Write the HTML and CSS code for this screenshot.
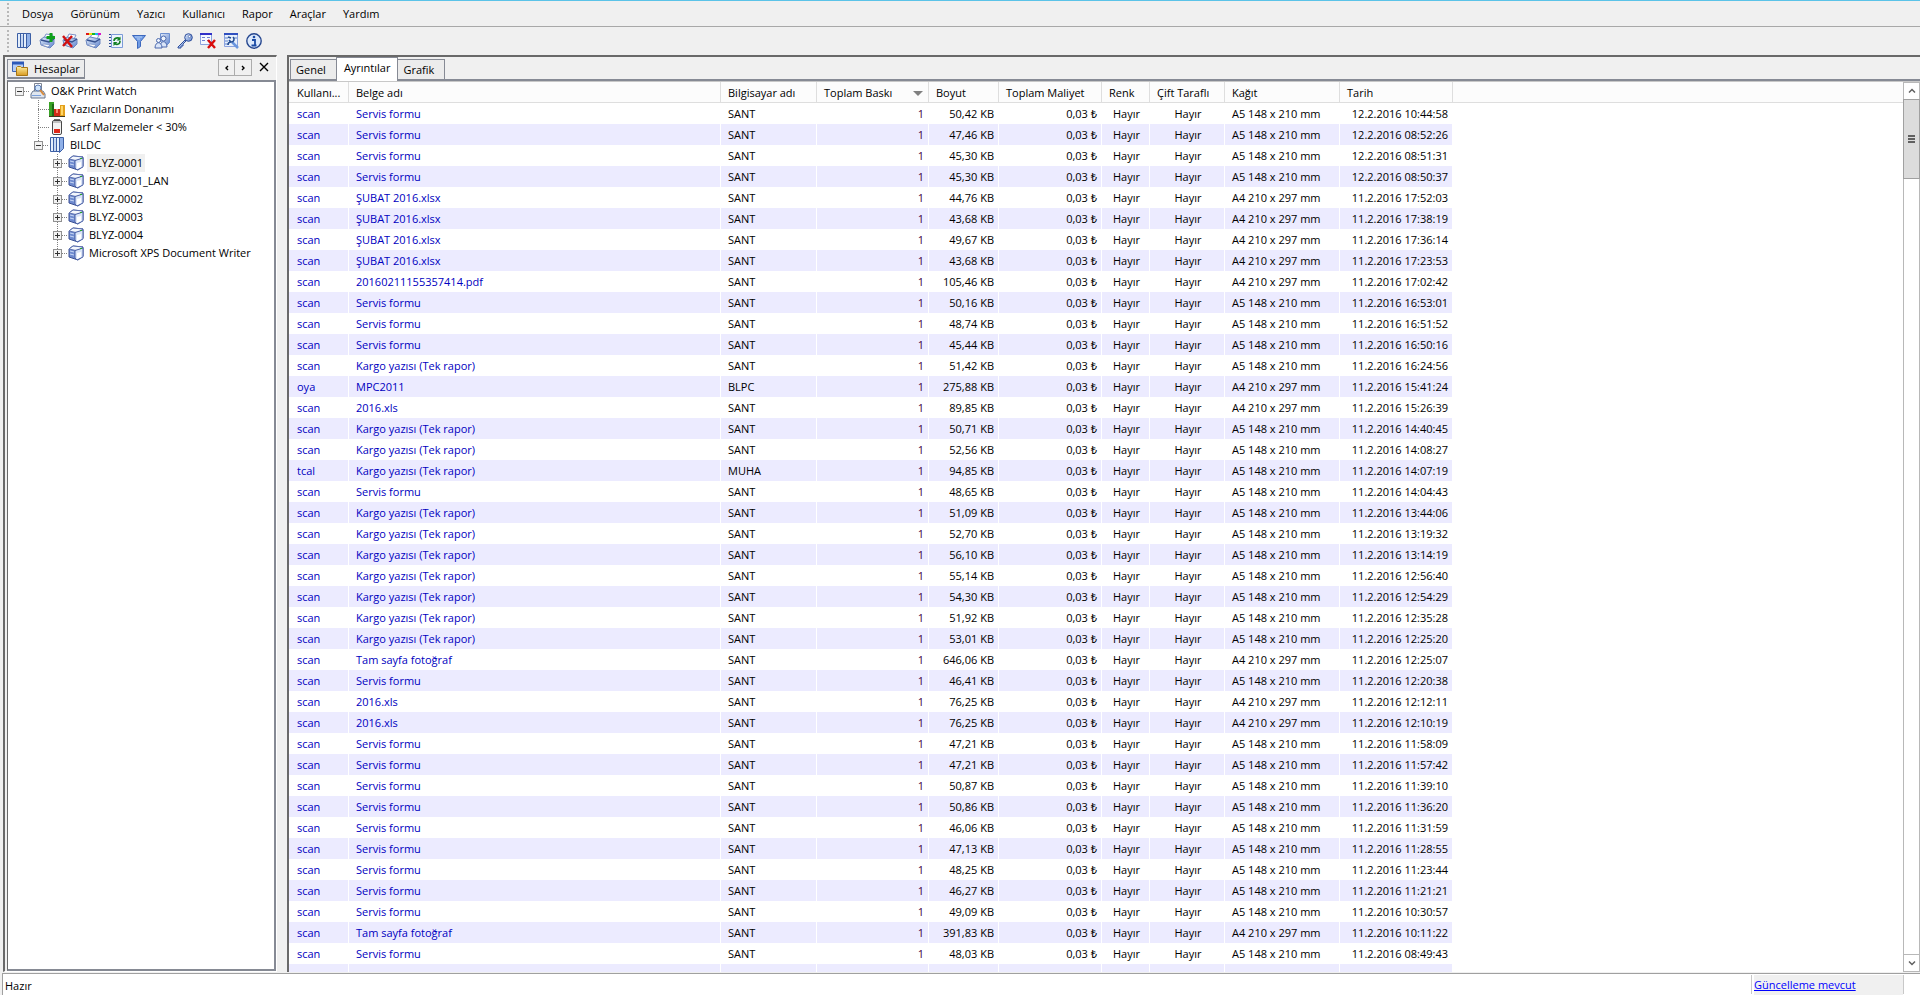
FILE: index.html
```html
<!DOCTYPE html>
<html lang="tr">
<head>
    <meta charset="UTF-8" />
    <title>O&amp;K Print Watch</title>
    <link rel="stylesheet" href="styles.css">
</head>
<body>
    <!-- shared icons -->
    <svg class="defs" width="0" height="0">
        <linearGradient id="blue" x1="0" y1="0" x2="1" y2="1">
            <stop offset="0" stop-color="#e4eefc"/><stop offset="1" stop-color="#5f83cc"/>
        </linearGradient>
        <linearGradient id="gold" x1="0" y1="0" x2="0" y2="1">
            <stop offset="0" stop-color="#fff0a0"/><stop offset="1" stop-color="#d89a20"/>
        </linearGradient>
        <symbol id="server" viewBox="0 0 16 16">
            <path d="M1.500 .5h9v14h-9z" fill="#e4eefb" stroke="#3c5fa5"/>
            <path d="M10.500 .5h4v11l-4 4z" fill="#8fb0e8" stroke="#3c5fa5"/>
            <path d="M4.500 1v13M7.500 1v13" stroke="#3c5fa5"/>
            <path d="M6 2v12" stroke="#a9c2ea"/>
        </symbol>
        <symbol id="printer" viewBox="0 0 16 16">
            <path d="M5 5l2-4 7 1-2 4z" fill="#fff" stroke="#7c92c8"/>
            <path d="M1 7l4-3 10 2v5l-4 4-9-3z" fill="url(#blue)" stroke="#6c86c0"/>
            <path d="M2 7l8 2 5-3" fill="none" stroke="#34508f" stroke-width="1.400"/>
            <path d="M3 12l6 2 2-2-6-1z" fill="#fff" stroke="#6e86bd" stroke-width=".6"/>
        </symbol>
        <symbol id="device" viewBox="0 0 16 16">
            <path d="M1 4l4-3 10 1v9l-5 4-9-3z" fill="#6f8bd0" stroke="#3a4f93"/>
            <path d="M1 4l4-3 10 1-5 4z" fill="#f4f7fd" stroke="#5b70b0"/>
            <path d="M7 5.500l8-2.500v9l-6 3-2-2z" fill="#dbe5f8" stroke="#4a60a6"/>
            <path d="M2 6l4 1M2 9l4 1" stroke="#c9d8f5"/>
            <path d="M9 8l4-1v5l-4 2z" fill="#fff"/>
            <path d="M12 3h2v1h-2z" fill="#27a52c"/>
        </symbol>
        <symbol id="cross" viewBox="0 0 16 16">
            <path d="M1 3l9 11M10 3L1 13" stroke="#d01010" stroke-width="2.400"/>
        </symbol>
    </svg>

    <nav class="menubar">
        <span class="grip"></span>
        <button>Dosya</button>
        <button>Görünüm</button>
        <button>Yazıcı</button>
        <button>Kullanıcı</button>
        <button>Rapor</button>
        <button>Araçlar</button>
        <button>Yardım</button>
    </nav>

    <div class="toolbar">
        <span class="grip"></span>
        <button aria-label="Sunucu"><svg viewBox="0 0 16 16"><use href="#server"/></svg></button>
        <button aria-label="Yazıcı ekle"><svg viewBox="0 0 16 16"><use href="#printer"/><path d="M12 0v9M7.500 4.500h9" stroke="#0fa01a" stroke-width="3"/></svg></button>
        <button aria-label="Yazıcı sil"><svg viewBox="0 0 16 16"><use href="#printer"/><use href="#cross"/></svg></button>
        <button aria-label="Renkli yazıcı"><svg viewBox="0 0 16 16"><use href="#printer"/><path d="M1 1h4" stroke="#e01818" stroke-width="2"/><path d="M4 1h3" stroke="#f2e010" stroke-width="2"/><path d="M7 1h3" stroke="#18b828" stroke-width="2"/><path d="M10 1h3" stroke="#18b0f0" stroke-width="2"/><path d="M13 1h3" stroke="#d818c8" stroke-width="2"/></svg></button>
        <button aria-label="Yenile"><svg viewBox="0 0 16 16"><path d="M3.500 1.500h11v13h-11z" fill="#eef4fd" stroke="#7c9bd8"/><path d="M2 1v14" stroke="#26478f" stroke-width="2" stroke-dasharray="1 2"/><path d="M6 8c0-3 4-4 6-2M12 8c0 4-4 4-6 2" fill="none" stroke="#148024" stroke-width="1.600"/><path d="M12.500 3.500v4h-4zM5.500 13V9h4z" fill="#148024"/></svg></button>
        <button aria-label="Filtre"><svg viewBox="0 0 16 16"><path d="M1.500 2.500h13l-5 6v5l-3 2v-7z" fill="#6f9be4" stroke="#3d68bd"/><path d="M4 4h7M6 6h3" stroke="#b9d2f8"/></svg></button>
        <button aria-label="Kullanıcılar"><svg viewBox="0 0 16 16"><path d="M6.500 .5h9v9l-3 3-6-4z" fill="url(#blue)" stroke="#6c8fd0"/><circle cx="9.500" cy="5.500" r="2.500" fill="#eef4fd" stroke="#4c69ad"/><path d="M6 14c0-7 7-7 7 0z" fill="#dbe6f9" stroke="#4c69ad"/><circle cx="4.500" cy="7.500" r="2" fill="#eef4fd" stroke="#4c69ad"/><path d="M1 15c0-7 7-7 7 0z" fill="#dbe6f9" stroke="#4c69ad"/></svg></button>
        <button aria-label="Parola"><svg viewBox="0 0 16 16"><path d="M8 7l-7 7v1h3v-2h2v-2l3-3z" fill="#a9c2ec" stroke="#2f4f9c"/><circle cx="11.500" cy="4.500" r="3.800" fill="url(#blue)" stroke="#2f4f9c"/><circle cx="12.500" cy="3.500" r="1.200" fill="#fff" stroke="#2f4f9c" stroke-width=".6"/></svg></button>
        <button aria-label="Kayıtları sil"><svg viewBox="0 0 16 16"><path d="M.5 1.500h11v10H.5z" fill="#f4f8ff" stroke="#8ba2de"/><path d="M0 1h12" stroke="#3030c8" stroke-width="2"/><path d="M2 4.500h3M7 4.500h3M2 7.500h3M7 7.500h3" stroke="#6f80d0"/><path d="M8 7l7 8M15 7l-7 8" stroke="#d80c0c" stroke-width="2.400"/></svg></button>
        <button aria-label="Ayarlar"><svg viewBox="0 0 16 16"><path d="M1.500 1.500h13v12h-13z" fill="#e8f0fc" stroke="#8ba2de"/><path d="M1 1h14" stroke="#3050c0" stroke-width="2"/><path d="M2 5h3M2 8h3M2 11h3M11 5h3" stroke="#5b80cc"/><path d="M9 9l6 6" stroke="#6b96de" stroke-width="2.500"/><path d="M5 4l3 1M10 4c2 2 1 5-2 5-2 0-3 1-3 3M6 7l2 2" fill="none" stroke="#234c92" stroke-width="1.600"/></svg></button>
        <button aria-label="Hakkında"><svg viewBox="0 0 16 16"><circle cx="8" cy="8" r="7.200" fill="#dce9fb" stroke="#26478f" stroke-width="1.400"/><path d="M6 7h3v5M5.500 12.500h5" fill="none" stroke="#1b4ba5" stroke-width="1.800"/><circle cx="8" cy="4" r="1.300" fill="#1b4ba5"/></svg></button>
    </div>

    <main class="workspace">
        <aside class="accounts">
            <div class="caption">
                <button class="caption-tab">
                    <svg viewBox="0 0 16 16"><path d="M.5 1.500h11v9H.5z" fill="#b5cdf4" stroke="#3f67b5"/><path d="M0 2h12" stroke="#2c59b8" stroke-width="3"/><path d="M4.500 6.500l1-1h3l1 1h6v8h-11z" fill="url(#gold)" stroke="#a87614"/></svg>
                    Hesaplar
                </button>
                <button class="step" aria-label="Önceki"><svg viewBox="0 0 8 8"><path d="M5 2l-2 2 2 2" /></svg></button>
                <button class="step" aria-label="Sonraki"><svg viewBox="0 0 8 8"><path d="M3 2l2 2-2 2" /></svg></button>
                <button class="close" aria-label="Kapat"><svg viewBox="0 0 10 10"><path d="M1 1l8 8M9 1L1 9" /></svg></button>
            </div>
            <div class="tree">
                <ul>
                    <li>
                        <div class="node"><button class="toggle" aria-label="Daralt"></button><i class="dots"></i>
                            <svg viewBox="0 0 16 16"><path d="M4.500 .5h7v8h-7z" fill="#fff" stroke="#7c8494"/><path d="M1 11l2-3h10l2 3v4H1z" fill="#dfe6ef" stroke="#66758c"/><circle cx="8" cy="5" r="3" fill="#cfe4fb" stroke="#5a7db8"/><path d="M10 7l4 5" stroke="#d88a3a" stroke-width="2"/><path d="M2 12.500h9" stroke="#7aa0dc"/></svg>
                            <span>O&amp;K Print Watch</span></div>
                        <ul>
                            <li><div class="node"><i class="dots leaf"></i>
                                <svg viewBox="0 0 16 16"><path d="M0 1h5v14H0z" fill="#39a226"/><path d="M3 3h2v12H3z" fill="#1f6a18"/><path d="M5 8h6v7H5z" fill="#d02a18"/><path d="M7 8h2v4H7z" fill="#f58a70"/><path d="M11 4h5v11h-5z" fill="#e3a01c"/><path d="M12 5h2v9h-2z" fill="#ffd667"/><path d="M0 15.500h16" stroke="#403820"/></svg>
                                <span>Yazıcıların Donanımı</span></div></li>
                            <li><div class="node"><i class="dots leaf"></i>
                                <svg viewBox="0 0 16 16"><rect x="3.500" y="1.500" width="9" height="14" rx="1.500" fill="#f2f2f2" stroke="#484848"/><path d="M5 10h6v4H5z" fill="#e02818"/><path d="M4 3h8" stroke="#b0b0b0" stroke-width="1.500"/><path d="M5 0h6v1H5z" fill="#707070"/></svg>
                                <span>Sarf Malzemeler &lt; 30%</span></div></li>
                            <li>
                                <div class="node"><button class="toggle" aria-label="Daralt"></button><i class="dots"></i><svg viewBox="0 0 16 16"><use href="#server"/></svg><span>BILDC</span></div>
                                <ul>
                                    <li><div class="node"><button class="toggle plus" aria-label="Genişlet"></button><i class="dots"></i><svg viewBox="0 0 16 16"><use href="#device"/></svg><span class="selected">BLYZ-0001</span></div></li>
                                    <li><div class="node"><button class="toggle plus" aria-label="Genişlet"></button><i class="dots"></i><svg viewBox="0 0 16 16"><use href="#device"/></svg><span>BLYZ-0001_LAN</span></div></li>
                                    <li><div class="node"><button class="toggle plus" aria-label="Genişlet"></button><i class="dots"></i><svg viewBox="0 0 16 16"><use href="#device"/></svg><span>BLYZ-0002</span></div></li>
                                    <li><div class="node"><button class="toggle plus" aria-label="Genişlet"></button><i class="dots"></i><svg viewBox="0 0 16 16"><use href="#device"/></svg><span>BLYZ-0003</span></div></li>
                                    <li><div class="node"><button class="toggle plus" aria-label="Genişlet"></button><i class="dots"></i><svg viewBox="0 0 16 16"><use href="#device"/></svg><span>BLYZ-0004</span></div></li>
                                    <li><div class="node"><button class="toggle plus" aria-label="Genişlet"></button><i class="dots"></i><svg viewBox="0 0 16 16"><use href="#device"/></svg><span>Microsoft XPS Document Writer</span></div></li>
                                </ul>
                            </li>
                        </ul>
                    </li>
                </ul>
            </div>
        </aside>

        <section class="details">
            <div class="tabs">
                <button>Genel</button>
                <button class="active">Ayrıntılar</button>
                <button>Grafik</button>
            </div>
            <div class="list">
                <div class="list-body">
                    <table>
                        <colgroup>
                            <col class="c-user"><col class="c-doc"><col class="c-pc"><col class="c-count"><col class="c-size">
                            <col class="c-cost"><col class="c-color"><col class="c-duplex"><col class="c-paper"><col class="c-date"><col>
                        </colgroup>
                        <thead>
                            <tr>
                                <th>Kullanı...</th>
                                <th>Belge adı</th>
                                <th>Bilgisayar adı</th>
                                <th><div class="sorted">Toplam Baskı <i class="arrow"></i></div></th>
                                <th>Boyut</th>
                                <th>Toplam Maliyet</th>
                                <th>Renk</th>
                                <th>Çift Taraflı</th>
                                <th>Kağıt</th>
                                <th>Tarih</th>
                                <th></th>
                            </tr>
                        </thead>
                        <tbody id="jobs"></tbody>
                    </table>
                </div>
                <div class="scrollbar">
                    <button aria-label="Yukarı"><svg viewBox="0 0 8 8"><path d="M1 5.500l3-3 3 3" /></svg></button>
                    <div class="track"><div class="thumb"></div></div>
                    <button aria-label="Aşağı"><svg viewBox="0 0 8 8"><path d="M1 2.500l3 3 3-3" /></svg></button>
                </div>
            </div>
        </section>
    </main>

    <footer class="statusbar">
        <span class="status">Hazır</span>
        <div class="update"><a href="#">Güncelleme mevcut</a></div>
    </footer>

    <script>
    (() => {
        const S = 'Servis formu';
        const K = 'Kargo yazısı (Tek rapor)';
        const T = 'Tam sayfa fotoğraf';
        const SU = 'ŞUBAT 2016.xlsx';
        const paper = { A5: 'A5 148 x 210 mm', A4: 'A4 210 x 297 mm' };

        // document, size, paper, date, user, computer
        const jobs = [
            [S, '50,42', 'A5', '12.2.2016 10:44:58'],
            [S, '47,46', 'A5', '12.2.2016 08:52:26'],
            [S, '45,30', 'A5', '12.2.2016 08:51:31'],
            [S, '45,30', 'A5', '12.2.2016 08:50:37'],
            [SU, '44,76', 'A4', '11.2.2016 17:52:03'],
            [SU, '43,68', 'A4', '11.2.2016 17:38:19'],
            [SU, '49,67', 'A4', '11.2.2016 17:36:14'],
            [SU, '43,68', 'A4', '11.2.2016 17:23:53'],
            ['20160211155357414.pdf', '105,46', 'A4', '11.2.2016 17:02:42'],
            [S, '50,16', 'A5', '11.2.2016 16:53:01'],
            [S, '48,74', 'A5', '11.2.2016 16:51:52'],
            [S, '45,44', 'A5', '11.2.2016 16:50:16'],
            [K, '51,42', 'A5', '11.2.2016 16:24:56'],
            ['MPC2011', '275,88', 'A4', '11.2.2016 15:41:24', 'oya', 'BLPC'],
            ['2016.xls', '89,85', 'A4', '11.2.2016 15:26:39'],
            [K, '50,71', 'A5', '11.2.2016 14:40:45'],
            [K, '52,56', 'A5', '11.2.2016 14:08:27'],
            [K, '94,85', 'A5', '11.2.2016 14:07:19', 'tcal', 'MUHA'],
            [S, '48,65', 'A5', '11.2.2016 14:04:43'],
            [K, '51,09', 'A5', '11.2.2016 13:44:06'],
            [K, '52,70', 'A5', '11.2.2016 13:19:32'],
            [K, '56,10', 'A5', '11.2.2016 13:14:19'],
            [K, '55,14', 'A5', '11.2.2016 12:56:40'],
            [K, '54,30', 'A5', '11.2.2016 12:54:29'],
            [K, '51,92', 'A5', '11.2.2016 12:35:28'],
            [K, '53,01', 'A5', '11.2.2016 12:25:20'],
            [T, '646,06', 'A4', '11.2.2016 12:25:07'],
            [S, '46,41', 'A5', '11.2.2016 12:20:38'],
            ['2016.xls', '76,25', 'A4', '11.2.2016 12:12:11'],
            ['2016.xls', '76,25', 'A4', '11.2.2016 12:10:19'],
            [S, '47,21', 'A5', '11.2.2016 11:58:09'],
            [S, '47,21', 'A5', '11.2.2016 11:57:42'],
            [S, '50,87', 'A5', '11.2.2016 11:39:10'],
            [S, '50,86', 'A5', '11.2.2016 11:36:20'],
            [S, '46,06', 'A5', '11.2.2016 11:31:59'],
            [S, '47,13', 'A5', '11.2.2016 11:28:55'],
            [S, '48,25', 'A5', '11.2.2016 11:23:44'],
            [S, '46,27', 'A5', '11.2.2016 11:21:21'],
            [S, '49,09', 'A5', '11.2.2016 10:30:57'],
            [T, '391,83', 'A4', '11.2.2016 10:11:22'],
            [S, '48,03', 'A5', '11.2.2016 08:49:43'],
        ];

        const rows = jobs.map(([doc, size, p, date, user = 'scan', pc = 'SANT']) => `
            <tr><td>${user}</td><td>${doc}</td><td>${pc}</td><td>1</td><td>${size} KB</td><td>0,03 ₺</td>
            <td>Hayır</td><td>Hayır</td><td>${paper[p]}</td><td>${date}</td><td></td></tr>`);
        rows.push('<tr>' + '<td></td>'.repeat(11) + '</tr>');
        document.getElementById('jobs').innerHTML = rows.join('');
    })();
    </script>
</body>
</html>
```
FILE: styles.css
```css
* {
    box-sizing: border-box;
}

body {
    margin: 0;
    height: 100vh;
    display: flex;
    flex-direction: column;
    overflow: hidden;
    background: #f0f0f0;
    color: #000;
    font: 11px/18px "Open Sans", "Noto Sans", sans-serif;
    border-top: 1px solid #5bc3e8;
}

button {
    font: inherit;
    color: inherit;
    margin: 0;
    padding: 0;
    border: 0;
    background: none;
}

svg {
    display: block;
    flex: none;
    width: 16px;
    height: 16px;
}

.defs {
    position: absolute;
    width: 0;
    height: 0;
}

/* menu and toolbar */
.menubar,
.toolbar {
    display: flex;
    align-items: center;
    flex: none;
    padding-left: 7px;
}

.menubar {
    height: 26px;
    gap: 17px;
    border-bottom: 1px solid #a8a8a8;
}

.toolbar {
    height: 28px;
    gap: 7px;
}

.grip {
    width: 2px;
    height: 22px;
    background: repeating-linear-gradient(#b8b8b8 0 2px, transparent 2px 4px);
}

.menubar .grip {
    margin-right: -4px;
}

/* panels */
.workspace {
    flex: 1;
    min-height: 0;
    display: flex;
    gap: 10px;
    padding-left: 3px;
}

.accounts {
    flex: none;
    width: 274px;
    display: flex;
    flex-direction: column;
    border: 2px solid #696969;
    border-right: 1px solid #fff;
    border-bottom: 1px solid #fff;
    padding: 2px 0 0 2px;
}

.caption {
    display: flex;
    align-items: flex-start;
    height: 21px;
    flex: none;
}

.caption-tab {
    display: flex;
    align-items: center;
    gap: 6px;
    height: 20px;
    padding: 0 4px;
    margin-right: auto;
    border: 1px solid #868a94;
    border-bottom-width: 2px;
    background: #ececec;
}

.step {
    display: flex;
    align-items: center;
    justify-content: center;
    width: 17px;
    height: 17px;
    border: 1px solid #acacac;
}

.step + .step {
    border-left: 0;
}

.step svg {
    width: 8px;
    height: 8px;
}

.close {
    padding: 3px 7px 4px;
}

.close svg {
    width: 10px;
    height: 10px;
}

.caption path:only-child {
    fill: none;
    stroke: #000;
    stroke-width: 1.4;
}

.tree {
    flex: 1;
    background: #fff;
    border: 2px solid #868a94;
    border-left: 1px solid #696969;
    padding: 0 7px;
}

.tree ul {
    list-style: none;
    margin: 0;
    padding: 0;
}

.tree ul ul {
    padding-left: 19px;
}

.tree ul ul > li {
    background: repeating-linear-gradient(#808080 0 1px, transparent 1px 2px) 4px 0 / 1px 100% no-repeat;
}

.tree ul ul > li:last-child {
    background-size: 1px 9px;
}

.node {
    display: flex;
    align-items: center;
    height: 18px;
}

.node span {
    padding: 0 2px;
    margin-left: 3px;
    white-space: nowrap;
}

.node .selected {
    background: #f0f0f0;
}

.dots {
    width: 6px;
    height: 1px;
    background: repeating-linear-gradient(90deg, #808080 0 1px, transparent 1px 2px);
}

.dots.leaf {
    width: 11px;
    margin-left: 4px;
}

.toggle {
    width: 9px;
    height: 9px;
    border: 1px solid #919191;
    background: linear-gradient(#333, #333) center / 5px 1px no-repeat, #f2f2f2;
}

.toggle.plus {
    background: linear-gradient(#333, #333) center / 5px 1px no-repeat, linear-gradient(#333, #333) center / 1px 5px no-repeat, #f2f2f2;
}

/* details */
.details {
    flex: 1;
    min-width: 0;
    display: flex;
    flex-direction: column;
    border: 2px solid #696969;
    border-width: 2px 0 0 2px;
}

.tabs {
    display: flex;
    align-items: flex-end;
    flex: none;
    height: 24px;
    padding-left: 1px;
    border-bottom: 2px solid #868a94;
}

.tabs button {
    height: 20px;
    padding: 0 10px 0 5px;
    border: 1px solid #868a94;
    border-bottom: 0;
    background: #ececec;
}

.tabs .active {
    height: 24px;
    padding: 0 7px 4px;
    margin: 0 -1px -2px;
    background: #fff;
}

.list {
    flex: 1;
    min-height: 0;
    display: flex;
    background: #fff;
    border-top: 1px solid #c8c8c8;
}

.list-body {
    flex: 1;
    min-width: 0;
    overflow: hidden;
}

table {
    width: 100%;
    table-layout: fixed;
    border-collapse: separate;
    border-spacing: 0;
}

.c-user { width: 60px; }
.c-doc { width: 372px; }
.c-pc { width: 96px; }
.c-count { width: 112px; }
.c-size { width: 70px; }
.c-cost { width: 103px; }
.c-color { width: 48px; }
.c-duplex { width: 75px; }
.c-paper { width: 115px; }
.c-date { width: 113px; }

th,
td {
    height: 21px;
    padding: 0 5px 0 7px;
    border-right: 1px solid #fff;
    text-align: left;
    font-weight: normal;
    white-space: nowrap;
    overflow: hidden;
}

th {
    padding-top: 2px;
    background: #fcfcfc;
    border-right: 1px solid #dedede;
    border-bottom: 1px solid #dedede;
}

th:first-child,
td:first-child {
    padding-left: 8px;
    padding-right: 0;
}

th:last-child {
    border-right: 0;
}

td:nth-child(1),
td:nth-child(2) {
    color: #0000c0;
}

td:nth-child(4) {
    color: #400040;
}

td:nth-child(4),
td:nth-child(5),
td:nth-child(6),
td:nth-child(10) {
    text-align: right;
    padding-right: 4px;
}

td:nth-child(7),
td:nth-child(8) {
    text-align: center;
    padding-right: 5px;
}

tbody tr:nth-child(even) td:not(:last-child) {
    background: #ecebff;
}

.sorted {
    display: flex;
    align-items: center;
    justify-content: space-between;
}

.arrow {
    border: 5px solid transparent;
    border-top-color: #808080;
    border-bottom: 0;
}

.scrollbar {
    flex: none;
    width: 17px;
    display: flex;
    flex-direction: column;
    border: 1px solid #b8b8b8;
}

.scrollbar button {
    display: flex;
    align-items: center;
    justify-content: center;
    height: 16px;
}

.scrollbar svg {
    width: 8px;
    height: 8px;
}

.scrollbar path {
    fill: none;
    stroke: #606060;
    stroke-width: 1.5;
}

.track {
    flex: 1;
    border-bottom: 1px solid #b8b8b8;
}

.thumb {
    height: 80px;
    margin: 0 -1px;
    border: 1px solid #a0a0a0;
    background: repeating-linear-gradient(#606060 0 2px, transparent 2px 3px) center / 7px 8px no-repeat, #dcdcdc;
}

/* status bar */
.statusbar {
    flex: none;
    display: flex;
    height: 22px;
    margin: 1px 0 0 2px;
    padding: 1px 16px 1px 2px;
    background: #fff;
    border-top: 1px solid #a0a0a0;
    border-left: 1px solid #a0a0a0;
}

.status {
    flex: 1;
    line-height: 22px;
}

.update {
    width: 153px;
    padding-left: 2px;
    border-left: 1px solid #c8c8c8;
    border-right: 1px solid #c8c8c8;
}

.update a {
    display: block;
    background: #f0f0f0;
    color: #0000ff;
    line-height: 20px;
}
```
